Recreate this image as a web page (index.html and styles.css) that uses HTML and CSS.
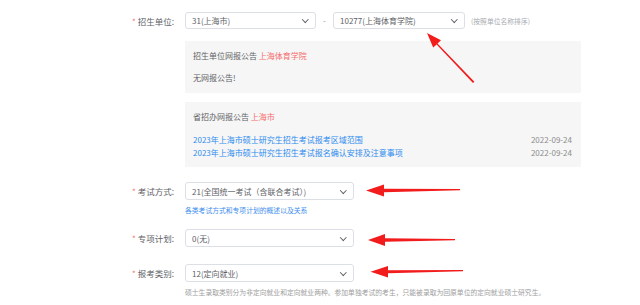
FILE: index.html
```html
<!DOCTYPE html>
<html lang="zh-CN">
<head>
<meta charset="utf-8">
<link rel="stylesheet" href="styles.css">
</head>
<body>
<div class="page">
  <div class="row row-unit">
    <div class="label"><span class="star">*</span>招生单位:</div>
    <div class="select w131"><span>31(上海市)</span><i class="chev"></i></div>
    <span class="dash">-</span>
    <div class="select w132"><span>10277(上海体育学院)</span><i class="chev"></i></div>
    <span class="hint">(按照单位名称排序)</span>
  </div>

  <div class="notice notice-unit">
    <div class="n-title">招生单位网报公告 <span class="hl">上海体育学院</span></div>
    <div class="n-empty">无网报公告!</div>
  </div>

  <div class="notice notice-prov">
    <div class="n-title">省招办网报公告 <span class="hl">上海市</span></div>
    <ul class="n-list">
      <li><a>2023年上海市硕士研究生招生考试报考区域范围</a><span class="date">2022-09-24</span></li>
      <li><a>2023年上海市硕士研究生招生考试报名确认安排及注意事项</a><span class="date">2022-09-24</span></li>
    </ul>
  </div>

  <div class="row row-exam">
    <div class="label"><span class="star">*</span>考试方式:</div>
    <div class="select w169"><span>21(全国统一考试（含联合考试）)</span><i class="chev"></i></div>
  </div>
  <div class="help help-blue">各类考试方式和专项计划的概述以及关系</div>

  <div class="row row-plan">
    <div class="label"><span class="star">*</span>专项计划:</div>
    <div class="select w169"><span>0(无)</span><i class="chev"></i></div>
  </div>

  <div class="row row-type">
    <div class="label"><span class="star">*</span>报考类别:</div>
    <div class="select w169"><span>12(定向就业)</span><i class="chev"></i></div>
  </div>
  <div class="help help-gray">硕士生录取类别分为非定向就业和定向就业两种。参加单独考试的考生，只能被录取为回原单位的定向就业硕士研究生。</div>
</div>

<svg class="arrows" width="640" height="305" viewBox="0 0 640 305">
  <polygon fill="#f21c1c" points="473,83 474.4,81.8 437.5,43.6 441,40.2 427,33 433.2,47.6 436.6,44.4"/>
  <polygon fill="#f21c1c" points="460,189 460,190.2 384,192.2 384,196.5 366,190.5 384,184.5 384,188.8"/>
  <polygon fill="#f21c1c" points="455,239 455,240.2 385,241.7 385,246 368,240 385,234 385,238.3"/>
  <polygon fill="#f21c1c" points="463,270 463,271.2 388,273.2 388,277.5 370.5,271.7 388,266 388,270.3"/>
</svg>
</body>
</html>
```

FILE: styles.css
```css
html, body {
  margin: 0;
  padding: 0;
  background: #fff;
}
body {
  font-family: "Noto Sans CJK SC", "Microsoft YaHei", sans-serif;
  font-size: 8px;
  color: #606266;
  position: relative;
  width: 640px;
  height: 305px;
  overflow: hidden;
}
.page {
  padding-top: 12px;
}
.row {
  display: flex;
  align-items: center;
  height: 17px;
}
.label {
  width: 177px;
  box-sizing: border-box;
  padding-right: 3px;
  text-align: right;
  font-size: 8.5px;
  color: #606266;
  white-space: nowrap;
  flex: none;
}
.star {
  color: #f56c6c;
  margin-right: 2px;
  font-size: 8px;
}
.select {
  margin-left: 8px;
  height: 17px;
  box-sizing: border-box;
  border: 1px solid #dcdfe6;
  border-radius: 3px;
  display: flex;
  align-items: center;
  justify-content: space-between;
  padding: 0 8px 0 6px;
  color: #606266;
  font-size: 8px;
  flex: none;
}
.w131 { width: 131px; }
.w132 { width: 132px; margin-left: 0; }
.w169 { width: 169px; }
.chev {
  width: 3.5px;
  height: 3.5px;
  border-right: 1.2px solid #5f6168;
  border-bottom: 1.2px solid #5f6168;
  transform: rotate(45deg);
  margin-top: -2px;
}
.dash {
  width: 17px;
  text-align: center;
  color: #909399;
  flex: none;
}
.hint {
  margin-left: 6px;
  font-size: 6.8px;
  color: #a8abb2;
}
.notice {
  margin-left: 185px;
  width: 396px;
  background: #f6f6f6;
  box-sizing: border-box;
  padding: 0 9px 0 8px;
  line-height: 12px;
  color: #606266;
}
.notice-unit {
  margin-top: 12px;
  height: 52px;
  padding-top: 9px;
}
.n-empty {
  margin-top: 10px;
}
.notice-prov {
  margin-top: 9px;
  height: 65px;
  padding-top: 9px;
}
.hl {
  color: #f56c6c;
}
.n-list {
  list-style: none;
  margin: 10px 0 0;
  padding: 0;
}
.n-list li {
  display: flex;
  justify-content: space-between;
  height: 13.3px;
  line-height: 13.3px;
}
.n-list a {
  color: #2d8cf0;
}
.date {
  color: #8c8c8c;
}
.row-exam { margin-top: 15px; height: 18px; }
.row-exam .select { height: 18px; }
.row-plan { margin-top: 14px; height: 18px; }
.row-plan .select { height: 18px; }
.row-type { margin-top: 17px; height: 18px; }
.row-type .select { height: 18px; }
.help {
  margin-left: 185px;
  font-size: 6.8px;
  line-height: 10px;
}
.help-blue {
  color: #3b8ded;
  margin-top: 5px;
}
.help-gray {
  color: #a0a0a0;
  margin-top: 5px;
}
.arrows {
  position: absolute;
  left: 0;
  top: 0;
  pointer-events: none;
}
```
